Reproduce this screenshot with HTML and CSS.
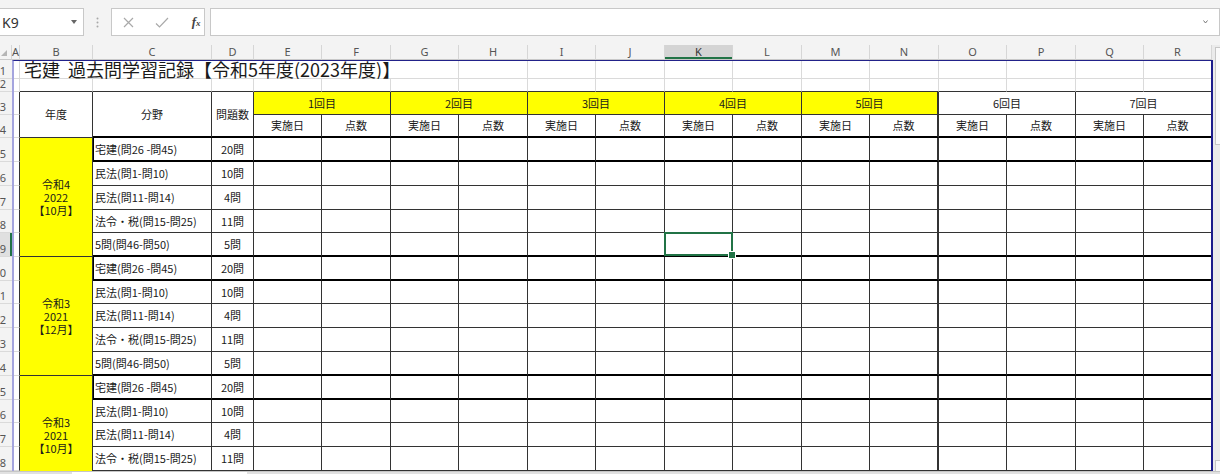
FILE: index.html
```html
<!DOCTYPE html>
<html lang="ja">
<head>
    <meta charset="UTF-8">
    <meta name="viewport" content="width=device-width, initial-scale=1.0">
    <title>宅建 過去問学習記録</title>
    <link rel="stylesheet" href="styles.css">
</head>
<body>

<div class="formula-bar">
    <div class="name-box">K9<span class="name-arrow"></span></div>
    <div class="bar-grip">
        <svg width="3" height="11" viewBox="0 0 3 11"><circle cx="1.5" cy="1.5" r="1" fill="#a8a8a8"/><circle cx="1.5" cy="5.5" r="1" fill="#a8a8a8"/><circle cx="1.5" cy="9.5" r="1" fill="#a8a8a8"/></svg>
    </div>
    <div class="bar-buttons">
        <svg class="btn-cancel" width="11" height="11" viewBox="0 0 11 11"><path d="M1 1L10 10M10 1L1 10" stroke="#a9a9a9" stroke-width="1.2" fill="none"/></svg>
        <svg class="btn-enter" width="14" height="11" viewBox="0 0 14 11"><path d="M1 6.5L4.5 10L13 1" stroke="#a9a9a9" stroke-width="1.2" fill="none"/></svg>
        <span class="btn-fx">f<small>x</small></span>
    </div>
    <div class="formula-input">
        <svg width="5" height="4" viewBox="0 0 5 4"><path d="M0.5 0.5L2.5 3L4.5 0.5" stroke="#777" stroke-width="1" fill="none"/></svg>
    </div>
</div>

<div class="sheet-area">
    <div class="sheet" id="sheet"></div>
    <div class="print-area"></div>
    <div class="vscroll">
        <div class="vscroll-thumb"></div>
        <div class="vscroll-end"></div>
    </div>
</div>

<div class="tabs"><div class="tab"></div></div>

<script>
    const sheet = document.getElementById('sheet');
    const letters = 'ABCDEFGHIJKLMNOPQR'.split('');
    const rounds = ['1回目', '2回目', '3回目', '4回目', '5回目', '6回目', '7回目'];
    const subjects = [
        ['宅建(問26 -問45)', '20問'],
        ['民法(問1-問10)', '10問'],
        ['民法(問11-問14)', '4問'],
        ['法令・税(問15-問25)', '11問'],
        ['5問(問46-問50)', '5問']
    ];
    const exams = [
        ['令和4', '2022', '【10月】'],
        ['令和3', '2021', '【12月】'],
        ['令和3', '2021', '【10月】']
    ];

    function cell(cls, html) {
        const el = document.createElement('div');
        el.className = cls;
        if (html !== undefined) el.innerHTML = html;
        sheet.appendChild(el);
        return el;
    }

    function rowHead(n) {
        cell('rh' + (n === 9 ? ' rh-sel' : ''), n);
    }

    // column letters
    cell('ch corner', '<span class="corner-mark"></span>');
    letters.forEach(l => cell('ch' + (l === 'K' ? ' ch-sel' : ''), l));

    // row 1: title overflows B..G
    rowHead(1);
    cell('c');
    cell('c title', '宅建 過去問学習記録【令和5年度(2023年度)】');
    for (let i = 0; i < 11; i++) cell('c');

    // row 2: empty, table starts below
    rowHead(2);
    cell('c');
    letters.slice(1).forEach(() => cell('c top-edge'));

    // rows 3-4: table header
    rowHead(3);
    cell('c a-edge');
    cell('c t span-2r', '年度');
    cell('c t span-2r thick-b', '分野');
    cell('c t span-2r thick-b', '問題数');
    rounds.forEach((r, i) => {
        cell('c t span-2c' + (i < 5 ? ' yellow' : '') + (i === 4 ? ' split' : ''), r);
    });

    rowHead(4);
    cell('c a-edge');
    rounds.forEach((r, i) => {
        cell('c t thick-b', '実施日');
        cell('c t thick-b' + (i === 4 ? ' split' : ''), '点数');
    });

    // data rows, five per exam
    let n = 5;
    exams.forEach(exam => {
        subjects.forEach(([name, count], i) => {
            const first = i === 0;
            const edge = first || i === subjects.length - 1 ? ' thick-b' : '';
            rowHead(n);
            cell('c a-edge');
            if (first) cell('c t yellow span-5r year', exam.join('<br>'));
            cell('c t left' + edge + (first ? ' thick-l' : ''), name);
            cell('c t' + edge, count);
            for (let j = 0; j < 14; j++) {
                let cls = 'c t' + edge;
                if (j === 9) cls += ' split';
                if (n === 9 && j === 6) cls += ' active';
                cell(cls);
            }
            n++;
        });
    });
</script>

</body>
</html>
```

FILE: styles.css
```css
* {
    box-sizing: border-box;
}
body {
    margin: 0;
    width: 1220px;
    height: 474px;
    overflow: hidden;
    background: #f3f3f3;
    font-family: "Noto Sans CJK JP", sans-serif;
    color: #1a1a1a;
}

/* formula bar */
.formula-bar {
    display: flex;
    align-items: flex-start;
    height: 45px;
    padding-top: 8px;
    width: 1220px;
    overflow: hidden;
}
.name-box {
    display: flex;
    align-items: center;
    justify-content: space-between;
    width: 88px;
    height: 28px;
    padding-left: 2px;
    background: #fff;
    border: 1px solid #c8c8c8;
    border-left: none;
    font-family: "Noto Sans", sans-serif;
    font-size: 14px;
    color: #333;
}
.name-arrow {
    width: 0;
    height: 0;
    margin-right: 6px;
    border-top: 4px solid #666;
    border-left: 3px solid transparent;
    border-right: 3px solid transparent;
}
.bar-grip {
    display: flex;
    align-items: center;
    justify-content: center;
    width: 28px;
    height: 28px;
}
.bar-buttons {
    display: flex;
    align-items: center;
    width: 99px;
    height: 28px;
    background: #fff;
    border: 1px solid #c8c8c8;
}
.btn-cancel {
    margin-left: 11px;
}
.btn-enter {
    margin-left: 21px;
}
.btn-fx {
    margin-left: 23px;
    font-family: "Liberation Serif", serif;
    font-style: italic;
    font-weight: bold;
    font-size: 13px;
    color: #444;
}
.btn-fx small {
    font-size: 9px;
}
.formula-input {
    display: flex;
    align-items: center;
    justify-content: flex-end;
    flex: none;
    width: 1010px;
    height: 28px;
    margin-left: 5px;
    padding-right: 11px;
    background: #fff;
    border: 1px solid #c8c8c8;
}

/* worksheet */
.sheet-area {
    position: relative;
    display: flex;
    height: 426px;
    overflow: hidden;
}
.sheet {
    display: grid;
    grid-template-columns: 12px 8px 73px 119px 42px repeat(6, 68px 69px) 68px 68px;
    grid-template-rows: 15px 19px 13px 23px 23px
        24px 24px 24px 23px 24px
        24px 23px 24px 24px 24px
        24px 23px 24px 24px 24px;
    width: 1212px;
    flex: none;
}
.ch {
    display: flex;
    align-items: center;
    justify-content: center;
    background: #f3f3f3;
    border-right: 1px solid #d6d6d6;
    border-bottom: 1px solid #c8c8c8;
    font-family: "Noto Sans", sans-serif;
    font-size: 11px;
    line-height: 14px;
    color: #555;
}
.ch-sel {
    background: #d4d4d4;
    box-shadow: inset 0 -2px #217346;
    color: #333;
}
.corner {
    align-items: flex-end;
    justify-content: flex-end;
    padding: 0 4px 3px 0;
}
.corner-mark {
    width: 0;
    height: 0;
    border-left: 6px solid transparent;
    border-bottom: 6px solid #b5b5b5;
}
.rh {
    display: flex;
    align-items: flex-end;
    justify-content: flex-end;
    padding-right: 6px;
    overflow: hidden;
    background: #f3f3f3;
    border-bottom: 1px solid #dadada;
    font-family: "Noto Sans", sans-serif;
    font-size: 11px;
    line-height: 14px;
    color: #555;
}
.rh-sel {
    background: #e0e0e0;
    box-shadow: inset -2px 0 #217346;
}

.c {
    display: flex;
    align-items: center;
    justify-content: center;
    background: #fff;
    border-right: 1px solid #dadada;
    border-bottom: 1px solid #dadada;
    font-size: 11px;
    line-height: 13px;
    white-space: nowrap;
    overflow: hidden;
}
.c.t {
    border-color: #333;
}
.c.top-edge {
    border-bottom-color: #333;
}
.c.a-edge {
    border-right-color: #333;
}
.c.thick-b {
    border-bottom: 2px solid #000;
}
.c.split {
    border-right: 2px solid #333;
}
.c.thick-l {
    box-shadow: inset 1px 0 #000;
}
.c.left {
    justify-content: flex-start;
    padding-left: 2px;
}
.c.yellow {
    background: #ffff00;
}
.c.year {
    text-align: center;
}
.title {
    justify-content: flex-start;
    padding-left: 4px;
    overflow: visible;
    font-size: 18px;
    line-height: 19px;
    word-spacing: 4px;
}
.span-2r {
    grid-row: span 2;
}
.span-5r {
    grid-row: span 5;
}
.span-2c {
    grid-column: span 2;
}
.title {
    grid-column: span 6;
}

/* selected cell K9 */
.c.active {
    position: relative;
    overflow: visible;
    z-index: 1;
}
.c.active::after {
    content: "";
    position: absolute;
    left: -1px;
    top: -1px;
    right: -1px;
    bottom: -1px;
    border: 2px solid #217346;
}
.c.active::before {
    content: "";
    position: absolute;
    right: -4px;
    bottom: -4px;
    width: 6px;
    height: 6px;
    background: #217346;
    border: 1px solid #fff;
    z-index: 2;
}

/* print area outline */
.print-area {
    position: absolute;
    left: 12px;
    top: 15px;
    width: 1201px;
    height: 430px;
    border-top: 1px solid #22228a;
    border-left: 2px solid #a4a4de;
    border-right: 2px solid #1d1d8c;
    pointer-events: none;
}

.vscroll {
    display: flex;
    flex-direction: column;
    justify-content: space-between;
    flex: none;
    width: 8px;
    padding: 2px 0 0 3px;
    background: #ebebeb;
}
.vscroll-thumb {
    height: 98px;
    background: #fafafa;
    border: 1px solid #c6c6c6;
    border-right: none;
}
.vscroll-end {
    height: 11px;
    background: #fafafa;
    border: 1px solid #c6c6c6;
    border-right: none;
    border-bottom: none;
}

.tabs {
    display: flex;
    height: 3px;
    background: #e1e1e1;
    border-top: 1px solid #c6c6c6;
}
.tab {
    width: 175px;
    margin-left: 72px;
    background: #fff;
}
```
